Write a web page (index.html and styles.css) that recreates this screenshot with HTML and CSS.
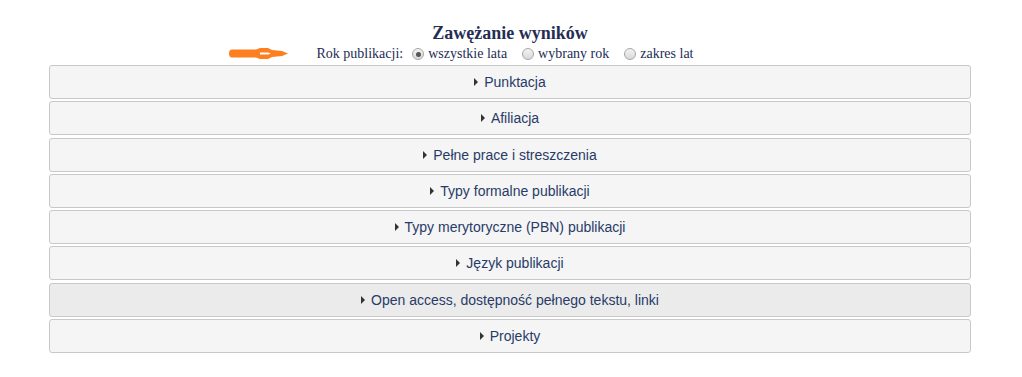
FILE: index.html
```html
<!DOCTYPE html>
<html lang="pl">
<head>
<meta charset="UTF-8" />
<title>Zawężanie wyników</title>
<link rel="stylesheet" href="styles.css">
</head>
<body>
	<div class="filters">
		<h2 class="filters-title">Zawężanie wyników</h2>
		<div class="year-row">
			<svg class="pointer" width="62" height="13" viewBox="0 0 62 13">
				<path d="M4 2.5 L28 2.5 L32 1 L40 1 L44 3 L54 4 L60 6.5 L54 9 L44 10 L40 12 L32 12 L28 10.5 L4 10.5 Q1 10.5 1 6.5 Q1 2.5 4 2.5 Z" fill="#fd7f21"/>
				<path d="M32 5.5 L40 5.5 L43 6.5 L40 7.5 L32 7.5 Z" fill="#fff"/>
			</svg>
			<span class="year-label">Rok publikacji:</span>
			<label><input type="radio" name="rok" checked> wszystkie lata</label>
			<label><input type="radio" name="rok"> wybrany rok</label>
			<label><input type="radio" name="rok"> zakres lat</label>
		</div>
		<div class="panel"><span class="caret"></span>Punktacja</div>
		<div class="panel"><span class="caret"></span>Afiliacja</div>
		<div class="panel"><span class="caret"></span>Pełne prace i streszczenia</div>
		<div class="panel"><span class="caret"></span>Typy formalne publikacji</div>
		<div class="panel"><span class="caret"></span>Typy merytoryczne (PBN) publikacji</div>
		<div class="panel"><span class="caret"></span>Język publikacji</div>
		<div class="panel panel-hover"><span class="caret"></span>Open access, dostępność pełnego tekstu, linki</div>
		<div class="panel"><span class="caret"></span>Projekty</div>
	</div>
</body>
</html>
```

FILE: styles.css
```css
body {margin: 0; background: #fff;}
.filters {width: 922px; margin: 0 0 0 49px; padding-top: 23px;}
.filters-title {margin: 0; font: bold 18px/20px "Liberation Serif", serif; color: #252d54; text-align: center;}
.year-row {position: relative; display: flex; justify-content: center; align-items: center; gap: 15px; height: 22px; padding-right: 10px; font: 14px/16px "Liberation Serif", serif; color: #252d54; margin-bottom: 0;}
.year-row label {display: flex; align-items: center;}
.year-row input {appearance: none; -webkit-appearance: none; margin: 0 4px 0 0; width: 12px; height: 12px; border: 1px solid #a6a6a6; border-radius: 50%; background: linear-gradient(#f3f3f3, #d9d9d9); box-sizing: border-box; position: relative;}
.year-row input:checked::after {content: ""; position: absolute; left: 2.5px; top: 2.5px; width: 5px; height: 5px; border-radius: 50%; background: #555;}
.year-label {margin-right: -6px;}
.pointer {position: absolute; left: 179px; top: 4px;}
.panel {height: 32px; margin-bottom: 2.3px; border: 1px solid #c8c8c8; border-radius: 3px; background: #f5f5f5; display: flex; justify-content: center; align-items: center; font: 14px "Liberation Sans", Arial, sans-serif; color: #283b68;}
.panel-hover {background: #ebebeb;}
.caret {width: 0; height: 0; border-left: 4px solid #333; border-top: 4px solid transparent; border-bottom: 4px solid transparent; margin-right: 6px;}
```
